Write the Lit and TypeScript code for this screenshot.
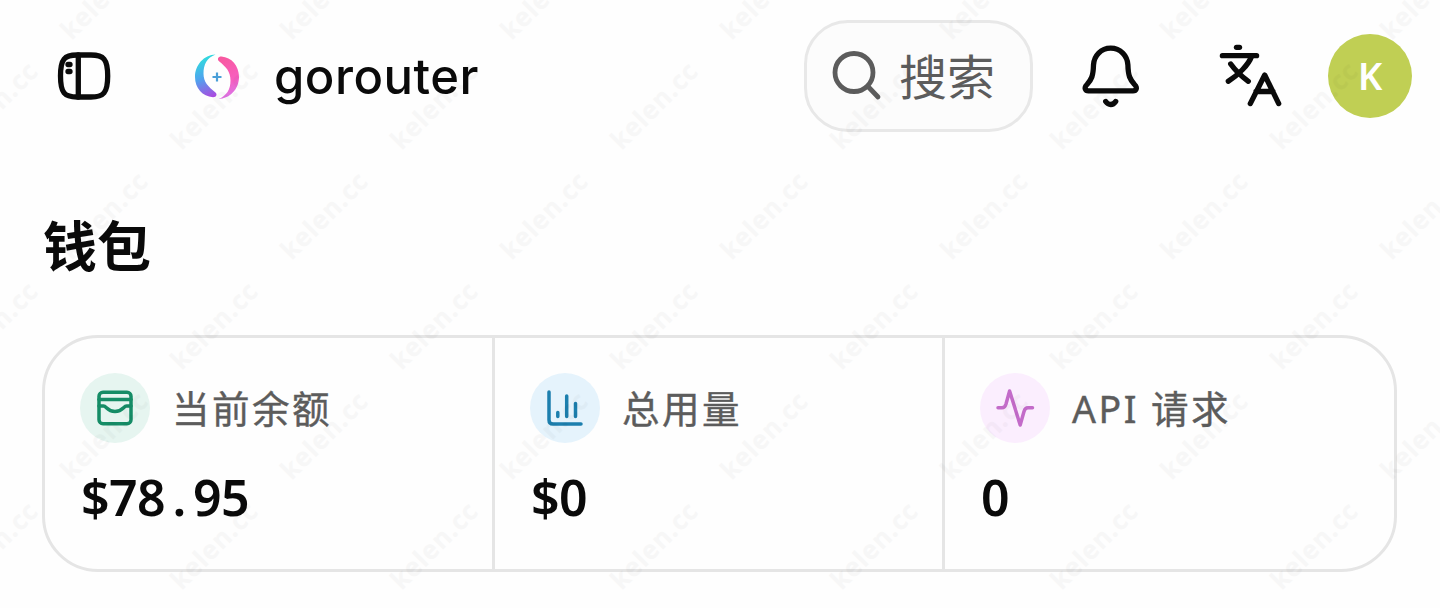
import { LitElement, css, html, svg } from 'lit';

const sidebarIcon = svg`
  <svg viewBox="56 48 56 56" width="56" height="56">
    <path d="M60.5 76C60.5 59 64.5 55 77 55H91C103.500 55 107.700 59 107.700 76C107.700 93 103.500 97 91 97H77C64.500 97 60.500 93 60.500 76Z" />
    <path d="M78.300 55V97" />
    <path d="M68 64.500H70M68 71.500H70" />
  </svg>`;

const logoIcon = svg`
  <svg viewBox="195 53 44 45" width="44" height="45">
    <defs>
      <linearGradient id="cool" x1="0.5" y1="0" x2="0.7" y2="1">
        <stop offset="0" stop-color="#2ee0dc" />
        <stop offset="0.5" stop-color="#4fa3ee" />
        <stop offset="1" stop-color="#a84ce0" />
      </linearGradient>
      <linearGradient id="warm" x1="0.3" y1="0" x2="0.5" y2="1">
        <stop offset="0" stop-color="#f8589f" />
        <stop offset="0.6" stop-color="#f75fc0" />
        <stop offset="1" stop-color="#d877ea" />
      </linearGradient>
    </defs>
    <path fill="url(#cool)" d="M215.500 53.600C204 54 195 64 195 76C195 87 202.500 95.500 213 96.200C216.500 96.300 217.500 93.500 215.500 91.500C208 85.500 203.500 81 203.500 72.500C203.500 63.500 207 57 215.500 53.600Z" />
    <path fill="url(#warm)" d="M218.500 98C230 97.600 239 88 239 76C239 65 231.500 56.300 221.500 55.600C218 55.500 217 58.300 219 60.300C226 66 230.500 70.500 230.500 79.500C230.500 88.500 226.500 94.800 218.500 98Z" />
    <path stroke="#4a9fd8" stroke-width="2.200" d="M212.500 76H221.500M217 71.500V80.500" />
  </svg>`;

const searchIcon = svg`
  <svg viewBox="832 52 50 50" width="50" height="50">
    <circle cx="854" cy="73.500" r="19" />
    <path d="M868 87.500L878 98" />
  </svg>`;

const bellIcon = svg`
  <svg viewBox="1080 40 62 70" width="62" height="70">
    <path d="M1110.700 47.200C1101 47.200 1094 54.500 1093.500 64C1093.200 75 1091.500 78.500 1087 83.500C1083.500 87 1085.500 89.800 1088.500 89.800H1133C1136 89.800 1138 87 1134.500 83.500C1130 78.500 1128.200 75 1127.900 64C1127.400 54.500 1120.500 47.200 1110.700 47.200Z" />
    <path d="M1105.700 100.500C1108.500 104.500 1113 104.500 1115.700 100.500" />
  </svg>`;

const translateIcon = svg`
  <svg viewBox="1218 42 66 68" width="66" height="68">
    <path d="M1236.500 47.300H1239.500" />
    <path d="M1222.400 55.700H1256.600" />
    <path d="M1251.500 56.500C1248.500 65 1238 75 1228.300 81.300" />
    <path d="M1230.700 64C1235 70 1241 76 1248.300 81.300" />
    <path d="M1250.300 103.600L1264.700 75L1278.700 103.600M1256 91.500H1273" />
  </svg>`;

const walletIcon = svg`
  <svg viewBox="95 388 40 40" width="40" height="40">
    <rect x="99" y="392.300" width="32" height="31.400" rx="4" />
    <path d="M99 399.500H131" />
    <path d="M99 406H103.500C106.500 406 107 411.500 115 411.500C123 411.500 123.500 406 126.500 406H131" />
  </svg>`;

const chartIcon = svg`
  <svg viewBox="545 388 40 40" width="40" height="40">
    <path d="M549 392V420C549 422.500 550.500 424 553 424H581" />
    <path d="M557.800 412.500V416.500M566.700 396V416.500M575.500 403.500V416.500" />
  </svg>`;

const activityIcon = svg`
  <svg viewBox="995 388 40 40" width="40" height="40">
    <path d="M998 407.800H1002C1004.500 407.800 1005.200 406.500 1006 404L1009.600 391L1020.200 425L1024 411.500C1024.800 408.800 1025.500 407.800 1028 407.800H1032.500" />
  </svg>`;

class Watermark extends LitElement {
	static styles = css`
    :host {
      position: absolute;
      inset: 0;
      overflow: hidden;
      pointer-events: none;
    }

    svg {
      display: block;
      width: 100%;
      height: 100%;
    }

    text {
      font: 600 25.5px "Noto Sans", sans-serif;
      letter-spacing: 1.2px;
      text-anchor: middle;
      fill: #000;
      stroke: #000;
      stroke-width: 0.7px;
      opacity: 0.022;
    }
  `;

	render() {
		const marks = [];
		for (let row = 0; row < 6; row++) {
			for (let col = 0; col < 7; col++) {
				marks.push({ x: col * 220 + (row % 2 ? -5 : 105), y: row * 110 - 4 });
			}
		}

		return html`
      <svg aria-hidden="true">
        ${marks.map(m => svg`<text transform="translate(${m.x} ${m.y}) rotate(-45)" y="8">kelen.cc</text>`)}
      </svg>
    `;
	}
}

customElements.define('app-watermark', Watermark);

class StatCell extends LitElement {
	static properties = {
		label: {},
		value: {},
		tone: {},
		icon: { attribute: false },
	};

	declare label: string;
	declare value: string;
	declare tone: string;
	declare icon: unknown;

	static styles = css`
    :host {
      display: flex;
      flex-direction: column;
      gap: 19px;
      padding: 35px;
    }

    .top {
      display: flex;
      align-items: center;
      gap: 22px;
      height: 70px;
    }

    .badge {
      display: grid;
      place-items: center;
      width: 70px;
      height: 70px;
      border-radius: 50%;
    }

    .badge svg {
      fill: none;
      stroke: currentColor;
      stroke-width: 3.5px;
      stroke-linecap: round;
      stroke-linejoin: round;
    }

    .green {
      color: #158c66;
      background: #e6f5f0;
    }

    .blue {
      color: #1c7fae;
      background: #e5f3fc;
    }

    .pink {
      color: #c36bc9;
      background: #fbeefe;
    }

    .label {
      padding-top: 1px;
      color: #5c5c5c;
      font-size: 37.5px;
      letter-spacing: 2.5px;
      line-height: 71px;
      white-space: nowrap;
      -webkit-text-stroke: 0.4px #5c5c5c;
    }

    .value {
      padding-left: 1px;
      color: #0a0a0a;
      font-size: 50px;
      font-weight: 600;
      line-height: 70px;
      letter-spacing: -0.6px;
    }

    .point {
      display: inline-block;
      width: 28px;
      text-align: center;
    }
  `;

	render() {
		const [whole, cents] = this.value.split('.');

		return html`
      <div class="top">
        <div class="badge ${this.tone}">${this.icon}</div>
        <div class="label">${this.label}</div>
      </div>
      <div class="value">${whole}${cents ? html`<span class="point">.</span>${cents}` : ''}</div>
    `;
	}
}

customElements.define('stat-cell', StatCell);

class AppRoot extends LitElement {
	static styles = css`
    :host {
      position: relative;
      display: block;
      width: 100%;
      height: 608px;
      overflow: hidden;
      background: #fefefe;
      color: #0a0a0a;
      font-family: "Noto Sans", "Noto Sans CJK SC", sans-serif;
    }

    .header {
      display: flex;
      align-items: center;
      height: 152px;
      padding: 0 28px 0 56px;
      box-sizing: border-box;
    }

    .icon {
      display: flex;
    }

    .icon svg {
      fill: none;
      stroke: currentColor;
      stroke-width: 5.3px;
      stroke-linecap: round;
      stroke-linejoin: round;
    }

    .brand {
      display: flex;
      align-items: center;
      gap: 35px;
      margin-left: 83px;
    }

    .name {
      padding-top: 1px;
      font-family: Inter, sans-serif;
      font-size: 49px;
      font-weight: 500;
      letter-spacing: 0.5px;
      line-height: 60px;
    }

    .actions {
      display: flex;
      align-items: center;
      margin-left: auto;
    }

    .search {
      display: flex;
      align-items: center;
      gap: 17px;
      width: 229px;
      height: 112px;
      padding-left: 25px;
      box-sizing: border-box;
      border: 3px solid #e8e8e8;
      border-radius: 44px;
      background: #fcfcfc;
      color: #5c5c5c;
      font-size: 48px;
      line-height: 60px;
    }

    .search svg {
      stroke-width: 4.8px;
    }

    .search span {
      padding-top: 1px;
    }

    .bell {
      margin-left: 47px;
    }

    .translate {
      margin-left: 76px;
    }

    .avatar {
      display: grid;
      place-items: center;
      width: 84px;
      height: 84px;
      margin-left: 44px;
      padding-bottom: 2px;
      box-sizing: border-box;
      border-radius: 50%;
      background: #c0cf54;
      color: #fff;
      font-size: 38px;
      font-weight: 600;
    }

    .title {
      margin: 54px 0 0 43px;
      font-size: 54px;
      font-weight: 600;
      line-height: 80px;
    }

    .stats {
      display: grid;
      grid-template-columns: 450px 450px 1fr;
      height: 237px;
      margin: 49px 43px 0 42px;
      box-sizing: border-box;
      border: 3px solid #e5e5e5;
      border-radius: 56px;
    }

    stat-cell:not(:last-child) {
      border-right: 3px solid #e5e5e5;
    }
  `;

	render() {
		return html`
      <div class="header">
        <div class="icon">${sidebarIcon}</div>
        <div class="brand">
          ${logoIcon}
          <span class="name">gorouter</span>
        </div>
        <div class="actions">
          <div class="search icon">${searchIcon}<span>搜索</span></div>
          <div class="icon bell">${bellIcon}</div>
          <div class="icon translate">${translateIcon}</div>
          <div class="avatar">K</div>
        </div>
      </div>

      <h1 class="title">钱包</h1>

      <div class="stats">
        <stat-cell label="当前余额" value="$78.95" tone="green" .icon=${walletIcon}></stat-cell>
        <stat-cell label="总用量" value="$0" tone="blue" .icon=${chartIcon}></stat-cell>
        <stat-cell label="API 请求" value="0" tone="pink" .icon=${activityIcon}></stat-cell>
      </div>

      <app-watermark></app-watermark>
    `;
	}
}

customElements.define('app-root', AppRoot);
